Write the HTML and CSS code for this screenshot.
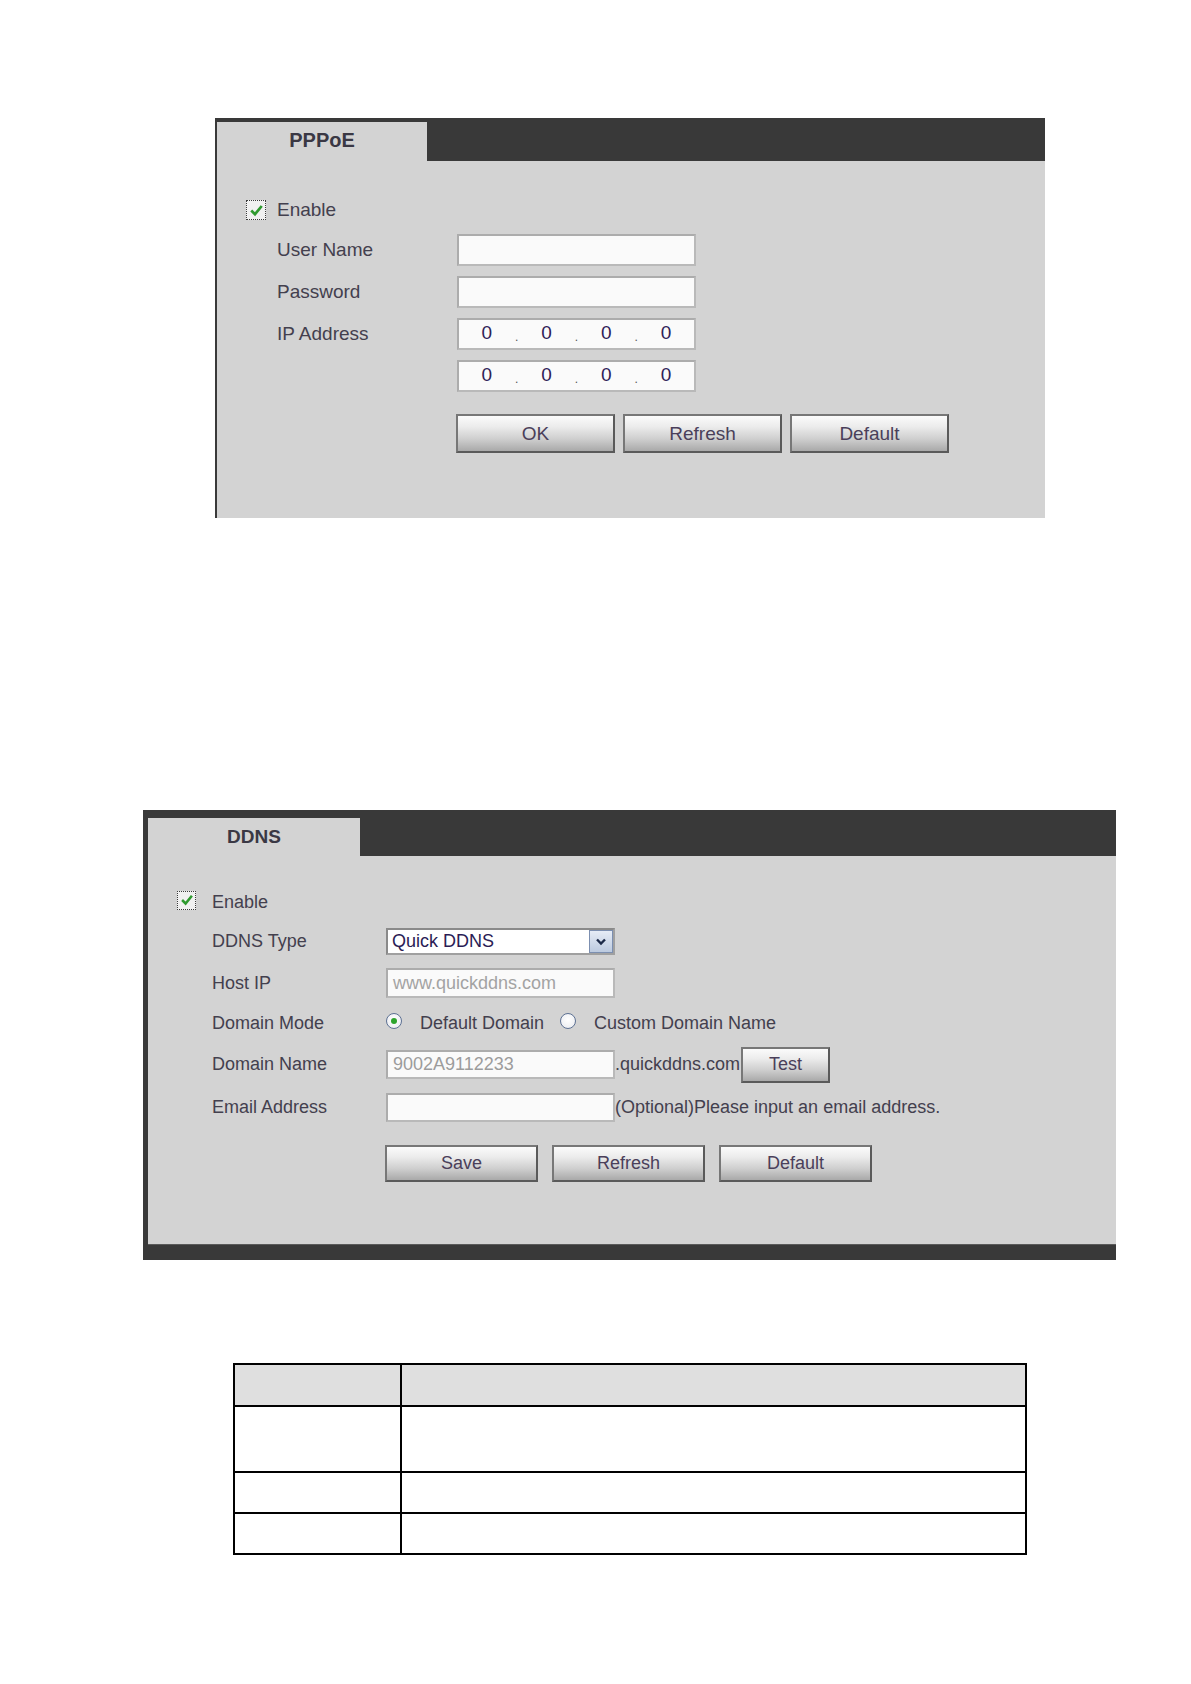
FILE: index.html
```html
<!DOCTYPE html>
<html>
<head>
<meta charset="utf-8">
<link rel="stylesheet" href="styles.css">
</head>
<body>
<div class="page">
  <section class="panel pppoe">
    <div class="tabbar"><div class="tab">PPPoE</div></div>
    <div class="body">
      <div class="row row-check">
        <span class="checkbox"><svg viewBox="0 0 20 20" width="15" height="15"><path d="M3 10 L8 15 L17 4" fill="none" stroke="#2f9a2f" stroke-width="3.6"/></svg></span>
        <span class="label">Enable</span>
      </div>
      <div class="row">
        <span class="label lw1">User Name</span>
        <span class="input"></span>
      </div>
      <div class="row">
        <span class="label lw1">Password</span>
        <span class="input"></span>
      </div>
      <div class="row">
        <span class="label lw1">IP Address</span>
        <span class="input ip"><span class="oct">0</span><span class="dot">.</span><span class="oct">0</span><span class="dot">.</span><span class="oct">0</span><span class="dot">.</span><span class="oct">0</span></span>
      </div>
      <div class="row">
        <span class="label lw1"></span>
        <span class="input ip"><span class="oct">0</span><span class="dot">.</span><span class="oct">0</span><span class="dot">.</span><span class="oct">0</span><span class="dot">.</span><span class="oct">0</span></span>
      </div>
      <div class="buttons">
        <button class="btn">OK</button>
        <button class="btn">Refresh</button>
        <button class="btn">Default</button>
      </div>
    </div>
  </section>

  <section class="panel ddns">
    <div class="tabbar"><div class="tab">DDNS</div></div>
    <div class="body">
      <div class="row row-check">
        <span class="checkbox"><svg viewBox="0 0 20 20" width="14" height="14"><path d="M3 10 L8 15 L17 4" fill="none" stroke="#2f9a2f" stroke-width="3.6"/></svg></span>
        <span class="label">Enable</span>
      </div>
      <div class="row r-type">
        <span class="label lw2">DDNS Type</span>
        <span class="select"><span class="sel-text">Quick DDNS</span><span class="sel-btn"><svg viewBox="0 0 14 12" width="14" height="12"><path d="M3 3.5 L7 7.5 L11 3.5" fill="none" stroke="#1d2a48" stroke-width="2.4"/></svg></span></span>
      </div>
      <div class="row r-host">
        <span class="label lw2">Host IP</span>
        <span class="input i2 h30 ph">www.quickddns.com</span>
      </div>
      <div class="row r-mode">
        <span class="label lw2">Domain Mode</span>
        <span class="radio on"><span class="radio-dot"></span></span>
        <span class="radio-text">Default Domain</span>
        <span class="radio"></span>
        <span class="radio-text">Custom Domain Name</span>
      </div>
      <div class="row r-name">
        <span class="label lw2">Domain Name</span>
        <span class="input i2 ph val">9002A9112233</span>
        <span class="suffix">.quickddns.com</span>
        <button class="btn test">Test</button>
      </div>
      <div class="row r-email">
        <span class="label lw2">Email Address</span>
        <span class="input i2"></span>
        <span class="suffix">(Optional)Please input an email address.</span>
      </div>
      <div class="buttons">
        <button class="btn">Save</button>
        <button class="btn">Refresh</button>
        <button class="btn">Default</button>
      </div>
    </div>
    <div class="footbar"></div>
  </section>

  <table class="params">
    <tr class="head"><td class="c1"></td><td></td></tr>
    <tr class="r1"><td class="c1"></td><td></td></tr>
    <tr class="r2"><td class="c1"></td><td></td></tr>
    <tr class="r2"><td class="c1"></td><td></td></tr>
  </table>
</div>
</body>
</html>
```

FILE: styles.css
```css
html, body {
  margin: 0;
  padding: 0;
  background: #ffffff;
}
body {
  font-family: "Liberation Sans", Arial, sans-serif;
  color: #43404e;
}
.page {
  padding-top: 118px;
  padding-bottom: 120px;
}

/* ---------- panels ---------- */
.panel {
  background: #d3d3d3;
  display: flex;
  flex-direction: column;
  box-sizing: border-box;
}
.tabbar {
  background: #393939;
  display: flex;
  align-items: flex-end;
}
.tab {
  background: #d3d3d3;
  display: flex;
  align-items: center;
  justify-content: center;
  font-weight: bold;
  color: #3a3844;
}
.body {
  flex: 1;
  display: flex;
  flex-direction: column;
}
.row {
  display: flex;
  align-items: center;
}
.label {
  white-space: nowrap;
}
.checkbox {
  box-sizing: border-box;
  border: 1px dotted #3c3c3c;
  background: #f1f1f1;
  display: flex;
  align-items: center;
  justify-content: center;
}

/* PPPoE */
.pppoe {
  margin-left: 215px;
  width: 830px;
  height: 400px;
  border-left: 2px solid #393939;
  font-size: 19px;
}
.pppoe .tabbar { height: 43px; }
.pppoe .tab { width: 210px; height: 39px; font-size: 20px; padding-bottom: 3px; box-sizing: border-box; }
.pppoe .body { padding-top: 30px; }
.pppoe .row { height: 42px; padding-left: 60px; }
.pppoe .row-check { height: 38px; padding-left: 29px; }
.pppoe .checkbox { width: 20px; height: 20px; margin-right: 11px; }
.lw1 { width: 180px; }
.input {
  box-sizing: border-box;
  width: 239px;
  height: 32px;
  background: #fafafa;
  border: 2px solid #b9b9b9;
  border-top-color: #acacac;
  border-left-color: #acacac;
  display: flex;
  align-items: center;
}
.ip { color: #2f2157; }
.oct { width: 56px; text-align: center; margin-top: -3px; }
.dot {
  width: 4px;
  text-align: center;
  font-size: 12px;
  align-self: flex-end;
  margin-bottom: 4px;
  color: #555;
}
.pppoe .buttons {
  display: flex;
  gap: 8px;
  margin-top: 17px;
  padding-left: 239px;
}
.btn {
  box-sizing: border-box;
  font-family: "Liberation Sans", Arial, sans-serif;
  color: #4a3f5a;
  border: 2px solid #5a5a5a;
  border-top-color: #777;
  border-left-color: #777;
  background: linear-gradient(to bottom, #fbfbfb 0%, #ececec 30%, #cfcfcf 65%, #a9a9a9 100%);
  padding: 0;
  margin: 0;
}
.pppoe .btn { width: 159px; height: 39px; font-size: 19px; }

/* DDNS */
.ddns {
  margin-top: 292px;
  margin-left: 143px;
  width: 973px;
  height: 450px;
  border-left: 5px solid #393939;
  font-size: 18px;
}
.ddns .tabbar { height: 46px; }
.ddns .tab { width: 212px; height: 38px; font-size: 19px; padding-bottom: 1px; box-sizing: border-box; }
.ddns .body { padding-top: 24px; }
.ddns .row { height: 41px; padding-left: 64px; }
.ddns .row-check { height: 40px; padding-left: 29px; }
.ddns .row-check .label { margin-top: 4px; }
.ddns .checkbox { width: 19px; height: 19px; margin-right: 16px; }
.ddns .r-type { height: 43px; }
.ddns .r-host { height: 40px; }
.ddns .r-mode { height: 40px; }
.ddns .r-name { height: 43px; }
.ddns .r-email { height: 42px; }
.lw2 { width: 174px; }
.i2 { width: 229px; height: 29px; font-size: 18px; padding-left: 5px; }
.h30 { height: 30px; }
.ph { color: #a3a3a3; }
.val { color: #9c9c9c; }
.select {
  box-sizing: border-box;
  width: 229px;
  height: 27px;
  background: #ffffff;
  border: 2px solid #a0a0a0;
  border-top-color: #8a8a8a;
  border-left-color: #8a8a8a;
  display: flex;
  align-items: center;
  justify-content: space-between;
  color: #2a1c55;
}
.sel-text { padding-left: 4px; }
.sel-btn {
  box-sizing: border-box;
  width: 24px;
  height: 23px;
  margin-right: 0px;
  border: 1px solid #7c8fb0;
  background: linear-gradient(to bottom, #e6ecf6, #bccadf);
  display: flex;
  align-items: center;
  justify-content: center;
}
.radio {
  box-sizing: border-box;
  width: 16px;
  height: 16px;
  border-radius: 50%;
  border: 1.6px solid #5d7193;
  background: radial-gradient(circle at 50% 40%, #ffffff 0%, #e7e9ee 100%);
  display: flex;
  align-items: center;
  justify-content: center;
  margin-top: -4px;
}
.radio-dot {
  width: 6px;
  height: 6px;
  border-radius: 50%;
  background: #2da42d;
}
.radio.on { margin-right: 18px; }
.radio-text + .radio { margin-left: 16px; margin-right: 18px; }
.suffix { white-space: nowrap; }
.test {
  width: 89px;
  height: 36px;
  font-size: 18px;
  margin-left: 1px;
}
.ddns .buttons {
  display: flex;
  gap: 14px;
  margin-top: 17px;
  padding-left: 237px;
}
.ddns .buttons .btn { width: 153px; height: 37px; font-size: 18px; }
.footbar {
  height: 15px;
  background: #393939;
  border-top: 1px solid #5a5a5a;
}

/* table */
.params {
  margin-top: 103px;
  margin-left: 233px;
  width: 794px;
  border-collapse: collapse;
}
.params td {
  border: 2px solid #000;
  padding: 0;
}
.params .c1 { width: 165px; }
.params .head td { height: 40px; background: #dfdfdf; }
.params .r1 td { height: 64px; }
.params .r2 td { height: 39px; }
```
